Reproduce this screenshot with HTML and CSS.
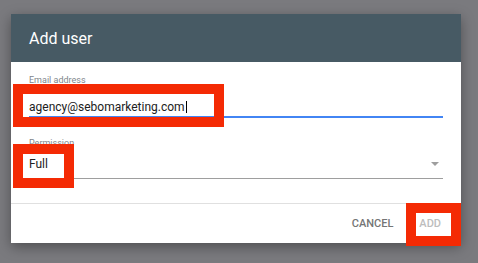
FILE: index.html
```html
<!DOCTYPE html>
<html>
<head>
<meta charset="utf-8">
<link rel="stylesheet" href="styles.css">
</head>
<body>
<div class="dialog">
  <div class="header"><span class="title">Add user</span></div>
  <div class="content">
    <div class="field">
      <div class="label">Email address</div>
      <div class="input input-focus"><span class="value">agency@sebomarketing.com</span><span class="cursor"></span></div>
    </div>
    <div class="field field-select">
      <div class="label">Permission</div>
      <div class="input input-select"><span class="value">Full</span><span class="arrow"></span></div>
    </div>
  </div>
  <div class="footer">
    <span class="btn btn-cancel">CANCEL</span>
    <span class="btn btn-add">ADD</span>
  </div>
</div>
<div class="mark mark-email"></div>
<div class="mark mark-perm"></div>
<div class="mark mark-add"></div>
</body>
</html>
```

FILE: styles.css
```css
html, body {
  margin: 0;
  padding: 0;
}
body {
  background: #7a7a7e;
  font-family: Roboto, "Liberation Sans", sans-serif;
  width: 478px;
  height: 263px;
  overflow: hidden;
  position: relative;
  padding: 14px 0 0 11px;
  box-sizing: border-box;
}
.dialog {
  width: 450px;
  height: 229px;
  background: #fff;
  box-shadow: 0 4px 12px rgba(0,0,0,0.35);
  display: flex;
  flex-direction: column;
}
.header {
  height: 48px;
  background: #475a64;
  display: flex;
  align-items: center;
  padding: 0 18px;
}
.title {
  color: #fff;
  font-size: 16px;
  font-weight: 400;
}
.content {
  padding: 13px 18px 24px 18px;
}
.label {
  font-size: 9px;
  line-height: 11px;
  color: #80868b;
}
.input {
  font-size: 12px;
  line-height: 16px;
  color: #212121;
  display: flex;
  align-items: center;
}
.input-focus {
  padding: 13px 0 1px 0;
  border-bottom: 2px solid #4285f4;
}
.cursor {
  display: inline-block;
  width: 1px;
  height: 12px;
  background: #000;
  margin-left: 1px;
}
.field-select {
  margin-top: 20px;
}
.input-select {
  padding: 7px 0 6px 0;
  border-bottom: 1px solid #9e9e9e;
  justify-content: space-between;
}
.arrow {
  width: 0;
  height: 0;
  border-left: 4px solid transparent;
  border-right: 4px solid transparent;
  border-top: 4px solid #9e9e9e;
  margin-right: 4px;
}
.footer {
  flex: 1;
  border-top: 1px solid #e0e0e0;
  display: flex;
  justify-content: flex-end;
  align-items: center;
  padding-right: 20px;
  gap: 26px;
}
.btn {
  font-size: 11px;
  font-weight: 500;
  line-height: 14px;
}
.btn-cancel { color: #757575; }
.btn-add { color: #bdbdbd; }
.mark {
  position: absolute;
  border: 10px solid #f42a04;
  box-sizing: border-box;
}
.mark-email { left: 13px; top: 84px; width: 211px; height: 43px; }
.mark-perm { left: 13px; top: 144px; width: 61px; height: 44px; }
.mark-add { left: 406px; top: 203px; width: 55px; height: 43px; }
```
